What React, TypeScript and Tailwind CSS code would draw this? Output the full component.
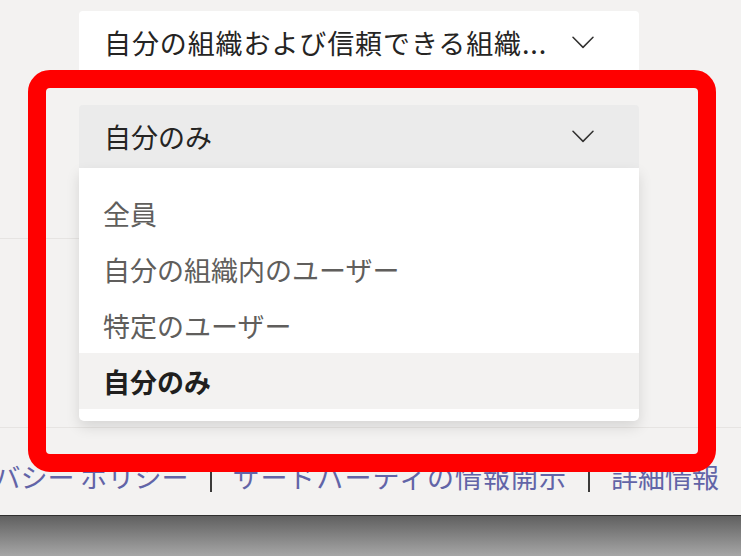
import React from "react";

const Chevron = () => (
  <svg width="22" height="13" viewBox="0 0 22 13" fill="none" className="shrink-0">
    <path d="M1 1.2 L11 11.4 L21 1.2" stroke="#323130" strokeWidth="1.5" strokeLinecap="round" strokeLinejoin="round" />
  </svg>
);

const font = "font-['Noto_Sans_CJK_JP','Noto_Sans',sans-serif]";

export default function App() {
  const items = ["全員", "自分の組織内のユーザー", "特定のユーザー"];
  return (
    <div className={`relative w-[741px] h-[556px] overflow-hidden bg-[#f3f2f1] ${font}`}>
      <div className="flex flex-col h-[515px]">
        <div className="pt-[11px]">
          <div className="ml-[79px] w-[560px] h-[63px] bg-white rounded-[4px] flex items-center justify-between pl-[25px] pr-[45px]">
            <span className="text-[27px] leading-none tracking-[0.9px] text-[#252423] whitespace-nowrap">自分の組織および信頼できる組織...</span>
            <Chevron />
          </div>
        </div>
        <div className="mt-[31px] relative ml-[79px] w-[560px] h-[63px] bg-[#ebebeb] rounded-t-[4px] flex items-center justify-between pl-[25px] pr-[45px] z-10">
          <span className="text-[27px] leading-none text-[#252423] whitespace-nowrap">自分のみ</span>
          <Chevron />
          <div className="absolute left-0 top-full w-[560px] bg-white rounded-b-[5px] pt-[17px] pb-[12px] shadow-[0_6px_14px_rgba(0,0,0,0.12)]">
            {items.map((t) => (
              <div key={t} className="h-[56px] flex items-center pl-[24px] text-[27px] leading-none text-[#605e5c] whitespace-nowrap">
                {t}
              </div>
            ))}
            <div className="h-[56px] flex items-center pl-[24px] bg-[#f3f2f1] text-[27px] leading-none font-bold text-[#201f1e] whitespace-nowrap">
              自分のみ
            </div>
          </div>
        </div>
        <div className="h-[70px]" />
        <div className="h-px w-[400px] bg-[#e6e4e2]" />
        <div className="h-[188px]" />
        <div className="h-px w-full bg-[#e6e4e2]" />
        <div className="flex-1 flex items-center justify-end pr-[22px] pt-[9px] gap-[21px] whitespace-nowrap text-[27px] leading-none text-[#6264a7]">
          <span className="shrink-0">プライバシー ポリシー</span>
          <span className="shrink-0 w-[2px] h-[22px] bg-[#3b3a39] mt-[10px]" />
          <span className="shrink-0 tracking-[1px]">サードパーティの情報開示</span>
          <span className="shrink-0 w-[2px] h-[22px] bg-[#3b3a39] mt-[10px]" />
          <span className="shrink-0">詳細情報</span>
        </div>
      </div>
      <div className="h-[41px] border-t border-[#2f2f2f] bg-[linear-gradient(to_bottom,#606060,#a6a6a6)]" />
      <div className="absolute left-[28px] top-[70px] w-[688px] h-[402px] border-[18px] border-[#ff0000] rounded-[22px] z-20 pointer-events-none" />
    </div>
  );
}
